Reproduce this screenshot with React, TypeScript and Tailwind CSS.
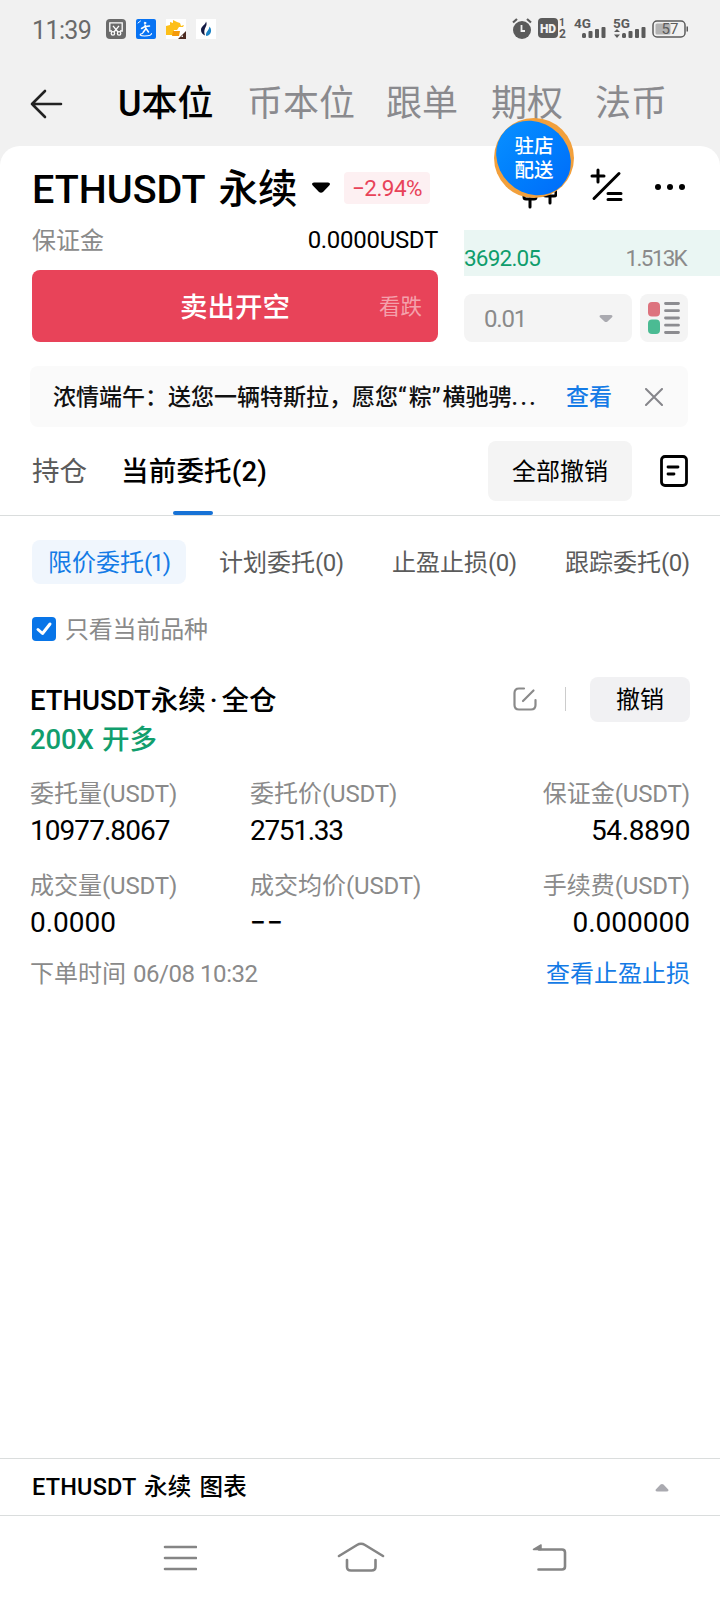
import React from "react";

const NAV_TABS = [
    { label: "U本位", className: "w-[95px] mr-[34px] font-medium text-black" },
    { label: "币本位", className: "w-[105px] mr-[34px] text-[#8a8a8e]" },
    { label: "跟单", className: "w-[70px] mr-[35px] text-[#8a8a8e]" },
    { label: "期权", className: "w-[70px] mr-[34px] text-[#8a8a8e]" },
    { label: "法币", className: "w-[70px] text-[#8a8a8e]" },
];

const FILTERS = ["计划委托", "止盈止损", "跟踪委托"];

const STATS = [
    { label: "委托量", value: "10977.8067", align: "text-left", tracking: "tracking-[-0.95px]" },
    { label: "委托价", value: "2751.33", align: "text-left", tracking: "tracking-[-1.3px]" },
    { label: "保证金", value: "54.8890", align: "text-right", tracking: "tracking-[-0.4px]" },
    { label: "成交量", value: "0.0000", align: "text-left", tracking: "tracking-normal" },
    { label: "成交均价", value: "−−", align: "text-left", tracking: "tracking-[1.3px] font-medium" },
    { label: "手续费", value: "0.000000", align: "text-right", tracking: "tracking-normal" },
];

const StatusBar: React.FC = () => (
    <div className="flex h-[58px] shrink-0 items-center justify-between pl-8 pr-[30px]">
        <div className="flex items-center">
            <span className="w-[74px] pt-0.5 text-[25px] leading-none tracking-[-0.6px] text-[#6a6a6a]">11:39</span>
            <svg width="110" height="20" viewBox="0 0 110 20">
                <rect width="20" height="20" rx="4" fill="#6b6b6b" />
                <g fill="none" stroke="#fff" strokeWidth="1.3">
                    <path d="M6 12H3.8V3.8h12.4V12H14" />
                    <path d="M7 6.8l5 6.2M13 6.8L8 13" />
                    <circle cx="6.9" cy="14.4" r="1.7" />
                    <circle cx="13.1" cy="14.4" r="1.7" />
                </g>
                <rect x="30" width="20" height="20" rx="2" fill="#0873f3" />
                <g fill="none" stroke="#fff" strokeLinecap="round">
                    <path d="M32 4l2.500-2" strokeWidth="1" />
                    <circle cx="39" cy="4" r=".8" fill="#fff" />
                    <path d="M39 6l1 3.500-3 4M40 9.500l2.500 3.500M35.500 9.500l3.500-2 4.500-.5" strokeWidth="1.500" />
                    <path d="M36.500 14.500c-4 .8-2.500 2.500 2 2.500 3.500 0 7-1 7-2.500" strokeWidth="1.100" />
                </g>
                <rect x="60" width="20" height="20" fill="#fff" />
                <path d="M60 7l4-1V3l3 1V1l4 2 3 1 1 3 3-1-1 2h-4l-2 3H68l-1 5h-7z" fill="#fdbf18" />
                <path d="M67 12h7l-1 5h-7z" fill="#f49a0b" />
                <path d="M80 12v8h-8z" fill="#4b2a20" />
                <path d="M77 16v2h-2z" fill="#eee" />
                <rect x="90" width="20" height="20" fill="#fff" />
                <path d="M100 2.500c1.500 3-.2 5-1.200 7.500-.8 2-.6 4 .2 6.500-2.500-1-4-3-4-5.800 0-3.600 4.500-4.600 5-8.200z" fill="#141a44" />
                <path d="M103.500 7.500c2 2.300 2 5.200.8 7-1 1.500-2.300 2.500-4 2.600-1.600-3.600 2.700-5.400 3.200-9.600z" fill="#1b83c6" />
            </svg>
        </div>
        <svg width="178" height="36" viewBox="0 -6 178 36" className="font-['Roboto']">
            <g fill="#5b5b5b">
                <circle cx="10" cy="13" r="9" />
                <path d="M1 5.500L5 2M19 5.500L15 2" stroke="#5b5b5b" strokeWidth="2.200" />
                <path d="M9.500 8v6H13" fill="none" stroke="#f1f1f1" strokeWidth="1.800" />
                <rect x="26" y="1" width="20" height="20" rx="4" />
                <text x="36" y="15.500" fontSize="12" fontWeight="900" fill="#f1f1f1" textAnchor="middle">HD</text>
                <text x="47" y="9" fontSize="10.500" fontWeight="700">1</text>
                <text x="47" y="20.500" fontSize="12" fontWeight="700">2</text>
                <text x="62" y="11" fontSize="13.500" fontWeight="700">4G</text>
                <rect x="70" y="16" width="4" height="5" rx="1.500" />
                <rect x="76.500" y="14" width="4" height="7" rx="1" />
                <rect x="83" y="12" width="4" height="9" rx="1" />
                <rect x="89.500" y="10" width="4" height="11" rx="1" />
                <text x="101" y="11" fontSize="13.500" fontWeight="700">5G</text>
                <path d="M105 12l3 3h-6zM105 21l3-3.500h-6z" />
                <rect x="110" y="16" width="4" height="5" rx="1.500" />
                <rect x="116.500" y="14" width="4" height="7" rx="1" />
                <rect x="123" y="12" width="4" height="9" rx="1" />
                <rect x="129.500" y="10" width="4" height="11" rx="1" />
                <rect x="141" y="4" width="32" height="16" rx="4" fill="none" stroke="#5b5b5b" strokeWidth="1.500" />
                <rect x="143.500" y="6.500" width="15" height="11" rx="1.500" fill="#b3b3b3" />
                <rect x="174.500" y="9.500" width="1.500" height="5" />
                <text x="158" y="17.300" fontSize="15" textAnchor="middle">57</text>
            </g>
        </svg>
    </div>
);

const App: React.FC = () => {
    return (
        <div className="relative flex h-[1600px] w-[720px] flex-col overflow-hidden whitespace-nowrap bg-[#f1f1f1] font-['Roboto','Noto_Sans_CJK_SC',sans-serif] text-black">
            <StatusBar />

            <nav className="flex h-[88px] shrink-0 items-center pl-[30px] text-[36px] leading-none">
                <svg width="33" height="30" viewBox="0 0 33 30" fill="none" stroke="#222" strokeWidth="2.600" strokeLinecap="round" strokeLinejoin="round" className="mr-[55px] mt-1">
                    <path d="M31 15H2M15 2L2 15l13 13" />
                </svg>
                {NAV_TABS.map((tab) => (
                    <span key={tab.label} className={`shrink-0 pt-1 ${tab.className}`}>{tab.label}</span>
                ))}
            </nav>

            <main className="flex flex-1 flex-col rounded-t-[20px] bg-white">
                <header className="flex h-[84px] items-center pl-8">
                    <h1 className="w-[265px] pt-[3px] text-[39.5px] font-medium leading-none [word-spacing:4px]">ETHUSDT 永续</h1>
                    <svg width="20" height="12" viewBox="0 0 20 12" className="ml-[14px]">
                        <path d="M3 0.500h14q2 0 2 1.500 0 1-1.500 2.200L12 10q-2 1.500-4 0L2.500 4.200Q1 3 1 2 1 .5 3 .5z" />
                    </svg>
                    <span className="ml-[13px] flex h-8 w-[86px] items-center justify-center rounded bg-[#fdf0f2] pt-0.5 text-[22.5px] tracking-[-0.5px] text-[#e84359]">−2.94%</span>
                    <svg width="36" height="42" viewBox="0 0 36 42" fill="none" stroke="#000" strokeWidth="3" strokeLinecap="round" strokeLinejoin="round" className="-mt-px ml-[91px]">
                        <rect x="3" y="10" width="12" height="22" rx="2" />
                        <path d="M9 4v6M9 32v8M29 2v6M29 29v7" />
                        <rect x="23" y="8" width="12" height="21" rx="2" />
                    </svg>
                    <svg width="34" height="36" viewBox="0 0 34 36" fill="none" stroke="#000" strokeWidth="3" strokeLinecap="round" className="-mt-1.5 ml-[33px]">
                        <path d="M2 9h12M8 3v12M29 6.500L4 31.500M18 26.500h13M18 32.500h13" />
                    </svg>
                    <svg width="32" height="8" viewBox="0 0 32 8" className="-mt-0.5 ml-[30px]">
                        <circle cx="4" cy="4" r="3" />
                        <circle cx="16" cy="4" r="3" />
                        <circle cx="28" cy="4" r="3" />
                    </svg>
                </header>

                <section className="flex pl-8">
                    <div className="w-[406px]">
                        <div className="flex h-5 items-center justify-between text-[24px] leading-5">
                            <span className="pt-px text-[#8a8a8a]">保证金</span>
                            <span className="tracking-[-0.3px]">0.0000USDT</span>
                        </div>
                        <button className="mt-5 grid h-[72px] w-full grid-cols-[1fr_auto_1fr] items-center rounded-lg bg-[#e84359] px-4 pt-[3px] text-white">
                            <span />
                            <span className="text-[27.5px] font-medium">卖出开空</span>
                            <span className="text-right text-[21.5px] text-[#f4a1ac]">看跌</span>
                        </button>
                    </div>
                    <div className="ml-[26px] flex-1">
                        <div className="flex h-[46px] items-center justify-between bg-[#eaf6f3] pr-[34px] pt-3 text-[22.5px]">
                            <span className="tracking-[-0.8px] text-[#0f9d6c]">3692.05</span>
                            <span className="tracking-[-1.7px] text-[#8a8a8a]">1.513K</span>
                        </div>
                        <div className="mt-[18px] flex gap-2">
                            <div className="flex h-12 w-[168px] items-center justify-between rounded-lg bg-[#f4f4f4] pl-5 pr-[19px] text-[24px] tracking-[-1.2px] text-[#8a8a8a]">
                                <span className="pt-0.5">0.01</span>
                                <svg width="14" height="9" viewBox="0 0 14 9">
                                    <path d="M2.500 1h9q2 0 2 1.300 0 .7-1 1.500L8.500 7.500q-1.500 1-3 0l-4-3.700q-1-.8-1-1.500Q.5 1 2.500 1z" fill="#aaaab0" />
                                </svg>
                            </div>
                            <div className="flex h-12 w-12 items-center justify-center rounded-lg bg-[#f4f4f4]">
                                <svg width="32" height="32" viewBox="0 0 32 32">
                                    <rect y="0" width="12" height="14.500" rx="4" fill="#dd737e" />
                                    <rect y="17.500" width="12" height="14.500" rx="4" fill="#4bbb93" />
                                    <path d="M17.500 1.500h13M17.500 8.700h13M17.500 16h13M17.500 23.200h13M17.500 30.500h13" stroke="#8c8c90" strokeWidth="2.800" strokeLinecap="round" />
                                </svg>
                            </div>
                        </div>
                    </div>
                </section>

                <section className="ml-[30px] mt-6 flex h-[61px] w-[658px] items-center rounded-lg bg-[#fafafa] pl-[23px] text-[23px] font-medium">
                    <span className="w-[513px] pt-[3px] text-[#111]">
                        浓情端午：送您一辆特斯拉，愿您<span className="tracking-[2px]">“</span>粽<span className="tracking-[2px]">”</span>横驰骋<span className="tracking-[2.5px]">...</span>
                    </span>
                    <a className="w-[46px] pt-[3px] text-[#147be6]">查看</a>
                    <svg width="18" height="18" viewBox="0 0 18 18" stroke="#85858a" strokeWidth="2" strokeLinecap="round" className="ml-[33px]">
                        <path d="M1 1l16 16M17 1L1 17" />
                    </svg>
                </section>

                <section className="flex h-[89px] items-center border-b border-[#dadddd] pl-8">
                    <span className="w-[89px] pt-0.5 text-[27.5px] text-[#5b5b5b]">持仓</span>
                    <span className="relative flex h-full w-[145px] items-center pt-0.5 text-[27.5px] font-medium tracking-[0.2px]">
                        当前委托(2)
                        <i className="absolute bottom-0 left-[52px] h-1 w-10 rounded-full bg-[#1772d6]" />
                    </span>
                    <button className="ml-[222px] h-[60px] w-36 rounded-lg bg-[#f4f4f4] pt-px text-[24px]">全部撤销</button>
                    <svg width="28" height="32" viewBox="0 0 28 32" fill="none" stroke="#000" strokeWidth="2.800" strokeLinecap="round" className="ml-7">
                        <rect x="1.500" y="1.500" width="25" height="29" rx="3.500" />
                        <path d="M8 12h10M8 19h6" />
                    </svg>
                </section>

                <section className="mt-6 flex h-[44px] items-center pl-8 text-[24px] text-[#5b5b5b]">
                    <span className="mr-[33px] flex h-full w-[154px] shrink-0 items-center rounded-lg bg-[#f0f6fd] pl-4 pt-0.5 text-[#147be6]">
                        限价委托<span className="tracking-[-1.5px]">(1)</span>
                    </span>
                    {FILTERS.map((name) => (
                        <span key={name} className="w-[173px] shrink-0 pt-0.5">
                            {name}<span className="tracking-[-0.5px]">(0)</span>
                        </span>
                    ))}
                </section>

                <label className="mt-[33px] flex h-6 items-center gap-[9px] pl-8 text-[24px] leading-6 text-[#8a8a8a]">
                    <svg width="24" height="24" viewBox="0 0 24 24">
                        <rect width="24" height="24" rx="4" fill="#0875e8" />
                        <path d="M6 12.500l4.500 4L18 7" fill="none" stroke="#fff" strokeWidth="3" strokeLinecap="round" strokeLinejoin="round" />
                    </svg>
                    <span className="pt-px tracking-[-0.2px]">只看当前品种</span>
                </label>

                <article className="mt-9 pl-[30px] pr-[30px]">
                    <div className="flex h-[45px] items-center">
                        <h2 className="flex-1 pt-[3px] text-[27.5px] font-medium">
                            ETHUSDT永续<span className="px-1">·</span>全仓
                        </h2>
                        <svg width="24" height="24" viewBox="0 0 24 24" fill="none" stroke="#8a8a8a" strokeWidth="2.200" strokeLinecap="round" className="-mt-0.5">
                            <path d="M11 1.500H6Q1.500 1.500 1.500 6v12q0 4.500 4.500 4.500h12q4.500 0 4.500-4.500v-5M10 14L20.500 3.500" />
                        </svg>
                        <i className="-mt-0.5 ml-7 h-6 w-px bg-[#ccc]" />
                        <button className="ml-6 h-[45px] w-[100px] rounded-lg bg-[#f1f1f3] pt-px text-[24px]">撤销</button>
                    </div>
                    <p className="h-[34px] text-[27.5px] font-medium leading-9 tracking-[-0.1px] text-[#119e6d] [word-spacing:1.5px]">200X 开多</p>

                    <div className="mt-5 grid grid-cols-[220px_220px_220px] gap-y-[18px]">
                        {STATS.map((item) => (
                            <div key={item.label} className={item.align}>
                                <p className="text-[24px] leading-9 text-[#8a8a8a]">
                                    {item.label}<span className="tracking-[-0.15px]">(USDT)</span>
                                </p>
                                <p className={`text-[28px] leading-[38px] ${item.tracking}`}>{item.value}</p>
                            </div>
                        ))}
                    </div>

                    <div className="mt-[14px] flex h-9 items-center justify-between text-[24px]">
                        <span className="text-[#8a8a8a]">
                            下单时间 <span className="ml-px tracking-[-0.45px]">06/08 10:32</span>
                        </span>
                        <a className="text-[#147be6]">查看止盈止损</a>
                    </div>
                </article>

                <div className="mt-auto flex h-[58px] items-center justify-between border-y border-[#dadddd] pl-8 pr-[51px] text-[23.5px] font-medium">
                    <span className="pt-0.5 tracking-[0.2px] [word-spacing:2px]">ETHUSDT 永续 图表</span>
                    <svg width="14" height="9" viewBox="0 0 14 9">
                        <path d="M2.500 8.500h9q2 0 2-1.300 0-.7-1-1.500L8.500 1.500q-1.500-1-3 0l-4 4.200q-1 .8-1 1.500 0 1.300 2 1.300z" fill="#aaaab0" />
                    </svg>
                </div>

                <footer className="flex h-[84px] items-center pl-[163px]">
                    <svg width="34" height="26" viewBox="0 0 34 26" stroke="#858585" strokeWidth="2.600" strokeLinecap="round">
                        <path d="M2 2h31M2 13h31M2 24h31" />
                    </svg>
                    <svg width="48" height="31" viewBox="0 0 48 31" fill="none" stroke="#858585" strokeWidth="2.600" strokeLinecap="round" strokeLinejoin="round" className="-mt-0.5 ml-[140px]">
                        <path d="M2 14L20 3q4-2.500 8 0l18 11M10 18v7q0 3.500 4 3.500h20.500q4 0 4-3.500v-7" />
                    </svg>
                    <svg width="36" height="29" viewBox="0 0 36 29" fill="none" stroke="#858585" strokeWidth="2.600" strokeLinecap="round" className="-mt-0.5 ml-[147px]">
                        <path d="M7 6.500h23q3 0 3 3v14q0 3-3 3H6.500" />
                        <path d="M1.500 6.500L9 2v4.500z" fill="#858585" strokeWidth="1.500" strokeLinejoin="round" />
                    </svg>
                </footer>
            </main>

            {/* floating delivery badge */}
            <div className="absolute left-[494px] top-[118px] flex h-20 w-20 flex-col items-center justify-center overflow-hidden rounded-full bg-[#f2a03c] pt-0.5 text-[19.5px] font-medium leading-6 text-white">
                <span className="absolute left-0 top-[4.5px] h-[70px] w-[79px] rotate-45 rounded-[50%] bg-linear-to-r from-[#078cff] to-[#0070fa]" />
                <span className="relative">驻店</span>
                <span className="relative">配送</span>
            </div>
        </div>
    );
};

export default App;
